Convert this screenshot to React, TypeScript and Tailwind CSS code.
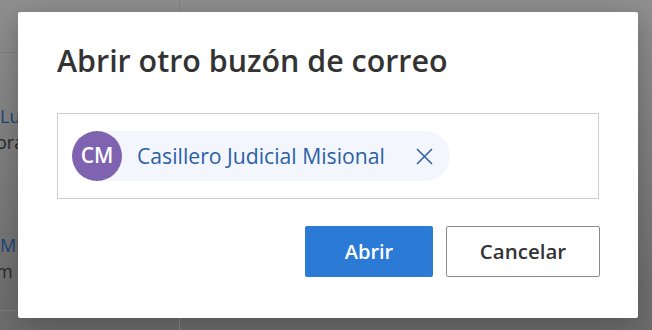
function PageRow({ name, line }: { name: string; line: string }) {
  return (
    <div className="h-[129px] border-b border-[#7c7c7c] pt-[50px] text-[18px] leading-[26px]">
      <div className="text-[#1d4478] whitespace-nowrap">{name}</div>
      <div className="text-[#2a2a2a] whitespace-nowrap -ml-[4px]">{line}</div>
    </div>
  );
}

function Chip() {
  return (
    <div className="flex items-center h-[50px] bg-[#f3f7fd] rounded-full pr-[17px]">
      <div className="w-[50px] h-[50px] rounded-full bg-[#8063b0] flex items-center justify-center text-white text-[21px] font-semibold">
        CM
      </div>
      <span className="ml-[15px] text-[21.2px] text-[#2b5fa6]">Casillero Judicial Misional</span>
      <svg className="ml-[31px]" width="17" height="17" viewBox="0 0 17 17" fill="none">
        <path d="M1 1L16 16M16 1L1 16" stroke="#2b5fa6" strokeWidth="1.5" />
      </svg>
    </div>
  );
}

export default function App() {
  return (
    <div className="relative w-[652px] h-[330px] overflow-hidden bg-gradient-to-b from-[#909090] to-[#6c6c6c] font-['Open_Sans',sans-serif]">
      {/* page behind the overlay */}
      <div className="flex h-full">
        <div className="w-[180px] border-r border-[#858585] flex flex-col">
          <div className="h-[53px] border-b border-[#7e7e7e]" />
          <PageRow name="Luis" line="orario" />
          <PageRow name="Mi" line="m" />
        </div>
        <div className="flex-1" />
      </div>

      {/* dialog */}
      <div className="absolute inset-0 flex items-start pl-[18px] pt-[12px]">
        <div className="w-[620px] h-[306px] bg-white rounded-[2px] shadow-[0_6px_30px_rgba(0,0,0,0.25)] px-[39px] pt-[29px] flex flex-col">
          <h1 className="text-[30.4px] leading-[40px] font-semibold text-[#333333]">Abrir otro buzón de correo</h1>

          <div className="mt-[32px] h-[86px] border border-[#cccccc] flex items-center px-[14px]">
            <Chip />
          </div>

          <div className="mt-[27px] flex justify-end gap-[13px] -mr-[1px]">
            <button className="w-[128px] h-[51px] rounded-[2px] bg-[#2b7ad5] text-white text-[20px] font-semibold">
              Abrir
            </button>
            <button className="w-[154px] h-[51px] rounded-[2px] border border-[#8a8a8a] bg-white text-[#333333] text-[20.5px] font-semibold">
              Cancelar
            </button>
          </div>
        </div>
      </div>
    </div>
  );
}
